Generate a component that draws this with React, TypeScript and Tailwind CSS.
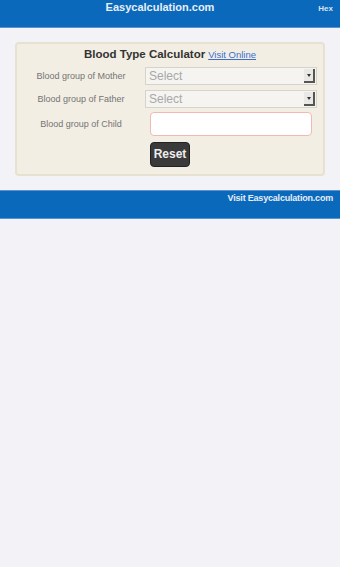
import { useState } from 'react';

const FONT = { fontFamily: '"Liberation Sans", Arial, sans-serif' };

function SelectBox({ value }: { value: string }) {
  return (
    <div className="flex h-[18px] w-[172px] items-center border border-[#d6d3cc] bg-[#f5f4f1] pl-[3px]">
      <span className="flex-1 text-[12px] leading-none text-[#a8a8a8]">{value}</span>
      <span className="mr-[1px] flex h-[14px] w-[11px] items-center justify-center border-r-2 border-b-2 border-[#555] bg-[#e9e8e4]">
        <span className="mt-[1px] h-0 w-0 border-x-[2px] border-t-[3px] border-x-transparent border-t-[#333]" />
      </span>
    </div>
  );
}

export default function App() {
  const [child, setChild] = useState('');

  return (
    <div className="min-h-[567px] bg-[#f3f2f6]" style={FONT}>
      <header className="relative flex h-[28px] items-start justify-center border-b border-[#5b93d2] bg-[#0a69bb] pr-[20px]">
        <span className="text-[11px] font-bold leading-[14px] text-[#e8eef8]">Easycalculation.com</span>
        <span className="absolute right-[7px] top-[3px] text-[8px] font-bold text-[#d7e3f4]">Hex</span>
      </header>

      <div className="px-[15px] pt-[14px]">
        <div className="rounded-[4px] border-2 border-[#e6e1d1] bg-[#f2eee3] pb-[7px]">
          <div className="mt-[2px] flex items-baseline justify-center">
            <span className="text-[11.5px] font-bold text-[#333]">Blood Type Calculator</span>
            <a className="ml-[3px] text-[9.5px] text-[#3a6fcf] underline">Visit Online</a>
          </div>

          <div className="mt-[4px] flex items-center">
            <span className="w-[128px] text-center text-[9px] text-[#747474]">Blood group of Mother</span>
            <SelectBox value="Select" />
          </div>
          <div className="mt-[5px] flex items-center">
            <span className="w-[128px] text-center text-[9px] text-[#747474]">Blood group of Father</span>
            <SelectBox value="Select" />
          </div>
          <div className="mt-[4px] flex items-center">
            <span className="w-[128px] text-center text-[9px] text-[#747474]">Blood group of Child</span>
            <input
              value={child}
              onChange={(e) => setChild(e.target.value)}
              className="ml-[5px] h-[24px] w-[162px] rounded-[4px] border border-[#f0b9b4] bg-white outline-none"
            />
          </div>
          <div className="mt-[5px] pl-[133px]">
            <button className="h-[25px] w-[40px] rounded-[4px] border border-[#222] bg-[#3a3a3a] text-[12px] font-bold text-[#eee]">
              Reset
            </button>
          </div>
        </div>
      </div>

      <footer className="mt-[14px] flex h-[29px] items-start justify-end border-y border-[#5b93d2] bg-[#0a69bb] pr-[7px]">
        <span className="mt-[1px] text-[9px] font-bold tracking-[-0.2px] text-[#e8eef8]">
          Visit Easycalculation.com
        </span>
      </footer>
    </div>
  );
}
